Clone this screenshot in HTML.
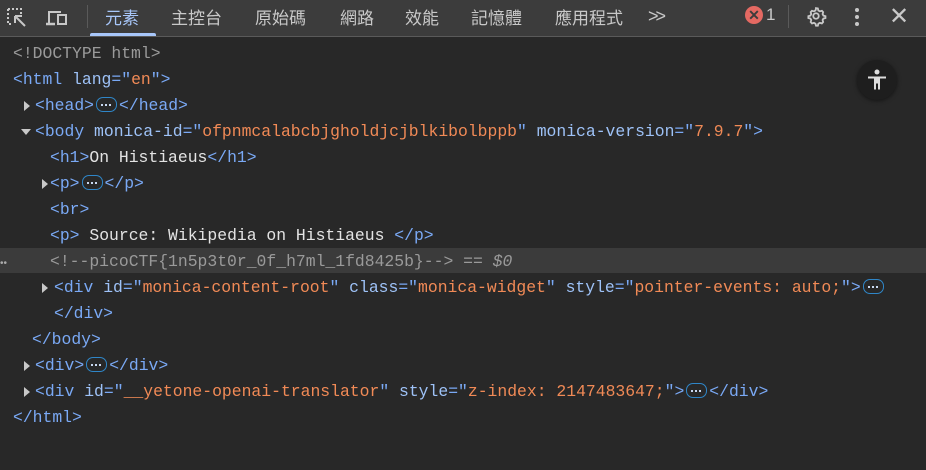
<!DOCTYPE html>
<html><head><style>
body{margin:0;width:926px;height:470px;background:#282828;overflow:hidden;position:relative;font-family:"Liberation Sans","Noto Sans CJK TC",sans-serif}
.hdr{position:absolute;left:0;top:0;width:926px;height:36px;background:#3c3c3c;border-bottom:1px solid #5a5a5a}
.tab{position:absolute;top:4px;font-size:17px;color:#c8c8c8;font-family:"Liberation Sans","Noto Sans CJK TC",sans-serif}
.code{position:absolute;left:0;top:41px;width:926px;font-family:"Liberation Mono",monospace;font-size:16.4px}
.l{position:absolute;height:26px;line-height:26px;white-space:pre}
.t{color:#7aa9f5}.n{color:#9ec2f7}.v{color:#f18a56}.x{color:#e3e3e3}.c{color:#9a9a9a}
.ar{position:absolute;width:0;height:0;border-top:5px solid transparent;border-bottom:5px solid transparent;border-left:6px solid #c8c8c8}
.ad{position:absolute;width:0;height:0;border-left:5px solid transparent;border-right:5px solid transparent;border-top:6px solid #c8c8c8}
.el{display:inline-block;width:19px;height:13px;border:1px solid #2f86c8;border-radius:7px;vertical-align:-2px;margin:0 2px;position:relative}
.el::after{content:"";position:absolute;left:4px;top:6px;width:2px;height:2px;background:#c8d8f0;box-shadow:4px 0 #c8d8f0,8px 0 #c8d8f0}
</style></head><body>
<div class="hdr">
<svg style="position:absolute;left:6px;top:7px" width="22" height="22" viewBox="0 0 22 22"><path d="M2 2h13v5M2 2v15h5" stroke="#c8c8c8" stroke-width="2" stroke-dasharray="2 2" fill="none"/><path d="M9 9l10 10M9 9h7M9 9v7" stroke="#c8c8c8" stroke-width="2" fill="none"/></svg>
<svg style="position:absolute;left:46px;top:7px" width="26" height="22" viewBox="0 0 26 22"><path d="M3 16V5h12" stroke="#c8c8c8" stroke-width="2" fill="none"/><path d="M0 17h9" stroke="#c8c8c8" stroke-width="2.5"/><rect x="12" y="8" width="8" height="9" stroke="#c8c8c8" stroke-width="2" fill="none"/></svg>
<div style="position:absolute;left:87px;top:5px;width:1px;height:23px;background:#5a5a5a"></div>
<div class="tab" style="left:105px;color:#a8c7fa">元素</div>
<div style="position:absolute;left:90px;top:33px;width:66px;height:3px;background:#a8c7fa;border-radius:2px 2px 0 0"></div>
<div class="tab" style="left:171px">主控台</div>
<div class="tab" style="left:255px">原始碼</div>
<div class="tab" style="left:340px">網路</div>
<div class="tab" style="left:405px">效能</div>
<div class="tab" style="left:471px">記憶體</div>
<div class="tab" style="left:555px">應用程式</div>
<div class="tab" style="left:648px;top:6px;font-size:18px;letter-spacing:-3px">&gt;&gt;</div>
<div style="position:absolute;left:745px;top:6px;width:18px;height:18px;border-radius:50%;background:#e46962;color:#3c3c3c;font-size:14px;line-height:18px;text-align:center;font-weight:bold">✕</div>
<div class="tab" style="left:766px;top:5px;font-size:17px;color:#c8c8c8">1</div>
<div style="position:absolute;left:788px;top:5px;width:1px;height:23px;background:#5a5a5a"></div>
<svg style="position:absolute;left:805px;top:5px" width="22" height="22" viewBox="0 0 24 24"><path fill="none" stroke="#c8c8c8" stroke-width="2" d="M12 3.5l2 .3.6 2.2 1.6.9 2.2-.6 1.4 1.5-.6 2.2.9 1.6 2.2.6v2l-2.2.6-.9 1.6.6 2.2-1.4 1.5-2.2-.6-1.6.9-.6 2.2h-2l-.6-2.2-1.6-.9-2.2.6-1.4-1.5.6-2.2-.9-1.6-2.2-.6v-2l2.2-.6.9-1.6-.6-2.2 1.4-1.5 2.2.6 1.6-.9.6-2.2z"/><circle cx="12" cy="12" r="3" fill="none" stroke="#c8c8c8" stroke-width="2"/></svg>
<div style="position:absolute;left:855px;top:8px;width:4px;height:4px;border-radius:2px;background:#c8c8c8;box-shadow:0 7px #c8c8c8,0 14px #c8c8c8"></div>
<div style="position:absolute;left:889px;top:2px;font-size:24px;color:#c8c8c8">✕</div>
</div>
<div style="position:absolute;left:857px;top:60px;width:40px;height:40px;border-radius:50%;background:#1e1e1e;box-shadow:0 1px 4px rgba(0,0,0,.5)"></div>
<svg style="position:absolute;left:866px;top:68px" width="22" height="24" viewBox="0 0 22 24"><circle cx="11" cy="4" r="2.5" fill="#ddd"/><path d="M2 8.5h18v2h-6v11h-2v-6h-2v6H8v-11H2z" fill="#ddd"/></svg>
<div style="position:absolute;left:0;top:248px;width:926px;height:25px;background:#3b3b3b"></div>
<div style="position:absolute;left:0;top:258px;color:#aaa;font-size:10px">••</div>
<div class="code">
<div class="l" style="left:13px;top:0"><span class="c">&lt;!DOCTYPE html&gt;</span></div>
<div class="l" style="left:13px;top:26px"><span class="t">&lt;html </span><span class="n">lang</span><span class="t">="</span><span class="v">en</span><span class="t">"&gt;</span></div>
<div class="ar" style="left:24px;top:60px"></div>
<div class="l" style="left:35px;top:52px"><span class="t">&lt;head&gt;</span><span class="el"></span><span class="t">&lt;/head&gt;</span></div>
<div class="ad" style="left:21px;top:88px"></div>
<div class="l" style="left:35px;top:78px"><span class="t">&lt;body </span><span class="n">monica-id</span><span class="t">="</span><span class="v">ofpnmcalabcbjgholdjcjblkibolbppb</span><span class="t">" </span><span class="n">monica-version</span><span class="t">="</span><span class="v">7.9.7</span><span class="t">"&gt;</span></div>
<div class="l" style="left:50px;top:104px"><span class="t">&lt;h1&gt;</span><span class="x">On Histiaeus</span><span class="t">&lt;/h1&gt;</span></div>
<div class="ar" style="left:42px;top:138px"></div>
<div class="l" style="left:50px;top:130px"><span class="t">&lt;p&gt;</span><span class="el"></span><span class="t">&lt;/p&gt;</span></div>
<div class="l" style="left:50px;top:156px"><span class="t">&lt;br&gt;</span></div>
<div class="l" style="left:50px;top:182px"><span class="t">&lt;p&gt; </span><span class="x">Source: Wikipedia on Histiaeus </span><span class="t">&lt;/p&gt;</span></div>
<div class="l" style="left:50px;top:208px"><span class="c">&lt;!--picoCTF{1n5p3t0r_0f_h7ml_1fd8425b}--&gt;</span><span class="c" style="font-style:italic"> == $0</span></div>
<div class="ar" style="left:42px;top:242px"></div>
<div class="l" style="left:54px;top:234px"><span class="t">&lt;div </span><span class="n">id</span><span class="t">="</span><span class="v">monica-content-root</span><span class="t">" </span><span class="n">class</span><span class="t">="</span><span class="v">monica-widget</span><span class="t">" </span><span class="n">style</span><span class="t">="</span><span class="v">pointer-events: auto;</span><span class="t">"&gt;</span><span class="el"></span></div>
<div class="l" style="left:54px;top:260px"><span class="t">&lt;/div&gt;</span></div>
<div class="l" style="left:32px;top:286px"><span class="t">&lt;/body&gt;</span></div>
<div class="ar" style="left:24px;top:320px"></div>
<div class="l" style="left:35px;top:312px"><span class="t">&lt;div&gt;</span><span class="el"></span><span class="t">&lt;/div&gt;</span></div>
<div class="ar" style="left:24px;top:346px"></div>
<div class="l" style="left:35px;top:338px"><span class="t">&lt;div </span><span class="n">id</span><span class="t">="</span><span class="v">__yetone-openai-translator</span><span class="t">" </span><span class="n">style</span><span class="t">="</span><span class="v">z-index: 2147483647;</span><span class="t">"&gt;</span><span class="el"></span><span class="t">&lt;/div&gt;</span></div>
<div class="l" style="left:13px;top:364px"><span class="t">&lt;/html&gt;</span></div>
</div>
</body></html>
